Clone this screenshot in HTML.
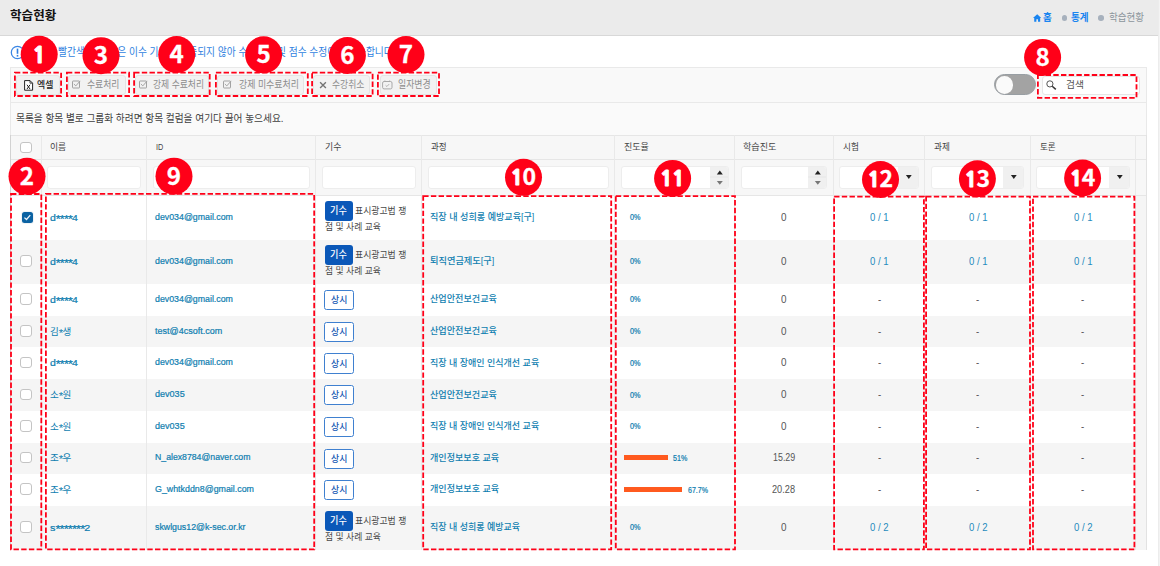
<!DOCTYPE html>
<html lang="ko">
<head>
<meta charset="utf-8">
<title>학습현황</title>
<style>
*{box-sizing:border-box;margin:0;padding:0}
html,body{width:1160px;height:566px;overflow:hidden;background:#fff}
body{position:relative;font-family:"Liberation Sans","Noto Sans CJK KR","NanumGothic",sans-serif;font-size:10px;color:#444}
.a{position:absolute}
.t{position:absolute;white-space:nowrap}
.g{background:#f5f5f5}
.vl{position:absolute;width:1px;background:#e8e8e8}
.hl{position:absolute;height:1px;background:#e6e6e6}
.fi{position:absolute;top:166px;height:22.8px;background:#fff;border:1px solid #ededed;border-radius:3px}
.sp{position:absolute;top:0;right:0;bottom:0;background:#f0f0f0;border-radius:0 2px 2px 0}
.cb{position:absolute;width:11.5px;height:11.5px;border:1px solid #c4c4c4;border-radius:3px;background:#fff}
.tagb{position:absolute;background:#0b58b8;border-radius:3px;width:28.3px;height:19.6px}
.tago{position:absolute;width:29.7px;height:20.4px;border:1px solid #3f80d0;border-radius:2.5px;background:#fff}
.btn{position:absolute;top:74.5px;height:20px;border:1px solid #e4e4e4;border-radius:3px;background:#f2f2f2}
.btn.on{background:#f1f1f1;border-color:#e6e6e6;box-shadow:0 1px 1.5px rgba(0,0,0,.12)}
.bar{position:absolute;height:4.8px;background:#ff5a1f}
</style>
</head>
<body>

<div class="a" style="left:0;top:0;width:1157.7px;height:36px;background:#ebebeb;border-bottom:1px solid #d8d8d8"></div>
<div class="a" style="left:1157.7px;top:0;width:3px;height:566px;background:#f3f3f3;border-left:1px solid #ececec"></div>
<div class="t" style="left:10px;top:8px;font-size:12.2px;line-height:16px;color:#111;transform:scaleX(1.0321);transform-origin:0 50%;font-weight:bold;">학습현황</div>
<svg class="a" style="left:1033px;top:13.5px" width="8.4" height="8.2" viewBox="0 0 9 8"><path d="M4.5 0 L9 4 H7.7 V8 H5.4 V5.3 H3.6 V8 H1.3 V4 H0 Z" fill="#1a85f0"/></svg>
<div class="t" style="left:1043px;top:11px;font-size:10.3px;line-height:14px;color:#1a85f0;transform:scaleX(0.9278);transform-origin:0 50%;font-weight:bold;">홈</div>
<div class="a" style="left:1061.7px;top:15.2px;width:5.6px;height:5.6px;border-radius:50%;background:#a7b1bd"></div>
<div class="t" style="left:1071.2px;top:11px;font-size:10.3px;line-height:14px;color:#1a85f0;transform:scaleX(0.9286);transform-origin:0 50%;font-weight:bold;">통계</div>
<div class="a" style="left:1098.2px;top:15.2px;width:5.6px;height:5.6px;border-radius:50%;background:#a7b1bd"></div>
<div class="t" style="left:1108.8px;top:11px;font-size:10.3px;line-height:14px;color:#8c959c;transform:scaleX(0.926);transform-origin:0 50%;">학습현황</div>
<svg class="a" style="left:9.5px;top:44.7px" width="15" height="15" viewBox="0 0 15 15"><circle cx="7.5" cy="7.5" r="6.2" fill="none" stroke="#3a86e4" stroke-width="1.25"/><rect x="6.7" y="3.6" width="1.6" height="5.2" fill="#2f7fe0"/><rect x="6.7" y="9.9" width="1.6" height="1.7" fill="#2f7fe0"/></svg>
<div class="t" style="left:58.1px;top:45px;font-size:11px;line-height:15px;color:#2f7fe0;transform:scaleX(0.8864);transform-origin:0 50%;">빨간색 표시 값은 이수 기준에 충족되지 않아 수료처리 및 점수 수정이 불가능합니다.</div>
<div class="a" style="left:10.3px;top:66.7px;width:1136.8px;height:36px;background:#f9f9f9;border:1px solid #e9e9e9"></div>
<div class="a" style="left:10.3px;top:102.7px;width:1136.8px;height:33px;background:#fafafa;border-left:1px solid #e9e9e9;border-right:1px solid #e9e9e9"></div>
<div class="t" style="left:16px;top:111px;font-size:10.3px;line-height:15px;color:#404040;transform:scaleX(0.9406);transform-origin:0 50%;">목록을 항목 별로 그룹화 하려면 항목 컬럼을 여기다 끌어 놓으세요.</div>
<div class="btn on" style="left:16.2px;width:43.7px"><svg class="a" style="left:6.5px;top:4px" width="10" height="11" viewBox="0 0 10 11"><path d="M0.6 0.6 H6 L8.6 3.2 V10.2 H0.6 Z" fill="#fff" stroke="#222" stroke-width="1"/><path d="M6 0.6 V3.2 H8.6" fill="none" stroke="#222" stroke-width="0.8"/><path d="M3 4.8 L6 9 M6 4.8 L3 9" stroke="#222" stroke-width="1" fill="none"/></svg></div>
<div class="t" style="left:37px;top:78px;font-size:9.1px;line-height:14px;color:#222;transform:scaleX(0.974);transform-origin:0 50%;font-weight:500;">엑셀</div>
<div class="btn" style="left:68.3px;width:57.5px"><svg class="a" style="left:3.2px;top:3.9px" width="9" height="10" viewBox="0 0 9 10"><rect x="0.5" y="2" width="7" height="7" rx="0.5" fill="none" stroke="#a2a2a2" stroke-width="1"/><path d="M1.9 5 L3.8 6.9 L8.2 1.9" fill="none" stroke="#a2a2a2" stroke-width="1"/></svg></div>
<div class="t" style="left:86.9px;top:78px;font-size:9.7px;line-height:14px;color:#8c8c8c;transform:scaleX(0.9087);transform-origin:0 50%;">수료처리</div>
<div class="btn" style="left:134.8px;width:74px"><svg class="a" style="left:3.2px;top:3.9px" width="9" height="10" viewBox="0 0 9 10"><rect x="0.5" y="2" width="7" height="7" rx="0.5" fill="none" stroke="#a2a2a2" stroke-width="1"/><path d="M1.9 5 L3.8 6.9 L8.2 1.9" fill="none" stroke="#a2a2a2" stroke-width="1"/></svg></div>
<div class="t" style="left:153.1px;top:78px;font-size:9.7px;line-height:14px;color:#8c8c8c;transform:scaleX(0.9079);transform-origin:0 50%;">강제 수료처리</div>
<div class="btn" style="left:217.2px;width:87.3px"><svg class="a" style="left:5.2px;top:3.9px" width="9" height="10" viewBox="0 0 9 10"><rect x="0.5" y="2" width="7" height="7" rx="0.5" fill="none" stroke="#a2a2a2" stroke-width="1"/><path d="M1.9 5 L3.8 6.9 L8.2 1.9" fill="none" stroke="#a2a2a2" stroke-width="1"/></svg></div>
<div class="t" style="left:238.6px;top:78px;font-size:9.7px;line-height:14px;color:#8c8c8c;transform:scaleX(0.9217);transform-origin:0 50%;">강제 미수료처리</div>
<div class="btn" style="left:313.4px;width:56.3px"><svg class="a" style="left:5px;top:5.5px" width="8" height="8" viewBox="0 0 8 8"><path d="M1.1 1.3 L6.9 6.9 M6.9 1.3 L1.1 6.9" stroke="#747474" stroke-width="1.35" fill="none"/></svg></div>
<div class="t" style="left:331.7px;top:78px;font-size:9.7px;line-height:14px;color:#8c8c8c;transform:scaleX(0.9087);transform-origin:0 50%;">수강취소</div>
<div class="btn" style="left:379.5px;width:57px"><svg class="a" style="left:1.6px;top:4.6px" width="11" height="10" viewBox="0 0 11 10"><rect x="0.6" y="1.5" width="9.4" height="7.4" rx="1.5" fill="none" stroke="#a8a8a8" stroke-width="1"/><path d="M2.9 0.5 V2 M7.7 0.5 V2" stroke="#a8a8a8" stroke-width="1"/><path d="M3.6 5.3 L4.9 6.5 L7.2 4.1" fill="none" stroke="#a8a8a8" stroke-width="0.9"/></svg></div>
<div class="t" style="left:397.7px;top:78px;font-size:9.7px;line-height:14px;color:#8c8c8c;transform:scaleX(0.9143);transform-origin:0 50%;">일자변경</div>
<div class="a" style="left:994px;top:74.3px;width:42px;height:21px;border-radius:11px;background:#a3a3a3;border:1px solid #989ea3"></div>
<div class="a" style="left:995.6px;top:75.9px;width:17.8px;height:17.8px;border-radius:50%;background:#fafafa"></div>
<div class="a" style="left:1042.2px;top:75.9px;width:98px;height:18.8px;border-radius:3px;background:#fff;border:1px solid #e6e6e6"></div>
<svg class="a" style="left:1046px;top:80.3px" width="11" height="10" viewBox="0 0 11 10"><circle cx="3.9" cy="3.9" r="3.1" fill="none" stroke="#555" stroke-width="1"/><path d="M6.2 6.2 L9.8 9.4" stroke="#333" stroke-width="1.5"/></svg>
<div class="t" style="left:1065.5px;top:78px;font-size:9.6px;line-height:14px;color:#505050;transform:scaleX(1.0138);transform-origin:0 50%;">검색</div>
<div class="a" style="left:10.5px;top:135.3px;width:1136.2px;height:60.2px;background:#f7f7f7;border-top:1px solid #e6e6e6"></div>
<div class="a" style="left:1135.9px;top:195.5px;width:10.8px;height:354.5px;background:#f5f5f5"></div>
<div class="a g" style="left:10.5px;top:239.5px;width:1125.4px;height:44.3px"></div>
<div class="a g" style="left:10.5px;top:315.8px;width:1125.4px;height:31.7px"></div>
<div class="a g" style="left:10.5px;top:379.2px;width:1125.4px;height:31.7px"></div>
<div class="a g" style="left:10.5px;top:442.6px;width:1125.4px;height:31.5px"></div>
<div class="a g" style="left:10.5px;top:505.7px;width:1125.4px;height:44.3px"></div>
<div class="hl" style="left:10.5px;top:158.9px;width:1136px"></div>
<div class="hl" style="left:10.5px;top:195px;width:1136px;background:#e6e6e6"></div>
<div class="vl" style="left:10.0px;top:135.3px;height:414.7px;background:#d2d2d2"></div>
<div class="vl" style="left:40.7px;top:135.3px;height:414.7px;background:#e9e9e9"></div>
<div class="vl" style="left:145.9px;top:135.3px;height:414.7px;background:#e9e9e9"></div>
<div class="vl" style="left:314.9px;top:135.3px;height:414.7px;background:#e9e9e9"></div>
<div class="vl" style="left:420.9px;top:135.3px;height:414.7px;background:#e9e9e9"></div>
<div class="vl" style="left:614.3px;top:135.3px;height:414.7px;background:#e9e9e9"></div>
<div class="vl" style="left:733.8px;top:135.3px;height:414.7px;background:#e9e9e9"></div>
<div class="vl" style="left:832.9px;top:135.3px;height:414.7px;background:#e9e9e9"></div>
<div class="vl" style="left:924.1px;top:135.3px;height:414.7px;background:#e9e9e9"></div>
<div class="vl" style="left:1029.9px;top:135.3px;height:414.7px;background:#e9e9e9"></div>
<div class="vl" style="left:1135.4px;top:135.3px;height:414.7px;background:#e9e9e9"></div>
<div class="vl" style="left:1146.0px;top:135.3px;height:414.7px;background:#e2e2e2"></div>
<div class="t" style="left:50.3px;top:140px;font-size:9.1px;line-height:14px;color:#444;transform:scaleX(0.9681);transform-origin:0 50%;">이름</div>
<div class="t" style="left:155.9px;top:140px;font-size:9.1px;line-height:14px;color:#444;transform:scaleX(0.8027);transform-origin:0 50%;">ID</div>
<div class="t" style="left:324.8px;top:140px;font-size:9.1px;line-height:14px;color:#444;transform:scaleX(0.974);transform-origin:0 50%;">기수</div>
<div class="t" style="left:430.8px;top:140px;font-size:9.1px;line-height:14px;color:#444;transform:scaleX(0.9382);transform-origin:0 50%;">과정</div>
<div class="t" style="left:624.1px;top:140px;font-size:9.1px;line-height:14px;color:#444;transform:scaleX(0.9917);transform-origin:0 50%;">진도율</div>
<div class="t" style="left:743.4px;top:140px;font-size:9.1px;line-height:14px;color:#444;transform:scaleX(0.9979);transform-origin:0 50%;">학습진도</div>
<div class="t" style="left:842.8px;top:140px;font-size:9.1px;line-height:14px;color:#444;transform:scaleX(0.9442);transform-origin:0 50%;">시험</div>
<div class="t" style="left:934.2px;top:140px;font-size:9.1px;line-height:14px;color:#444;transform:scaleX(0.9442);transform-origin:0 50%;">과제</div>
<div class="t" style="left:1039.7px;top:140px;font-size:9.1px;line-height:14px;color:#444;transform:scaleX(0.9382);transform-origin:0 50%;">토론</div>
<div class="cb" style="left:20.3px;top:141.8px"></div>
<div class="fi" style="left:47.2px;width:93.6px"></div>
<div class="fi" style="left:152.6px;width:157.2px"></div>
<div class="fi" style="left:322.1px;width:93.5px"></div>
<div class="fi" style="left:427.9px;width:181.3px"></div>
<div class="fi" style="left:621.0px;width:108.0px"><div class="sp" style="width:18.5px"><svg class="a" style="left:0;top:0" width="18" height="20" viewBox="0 0 18 20"><rect x="0" y="9.6" width="18" height="0.8" fill="#e4e4e4"/><path d="M6.8 7.6 L9.8 3.6 L12.8 7.6 Z" fill="#222"/><path d="M6.8 14 L9.8 17.8 L12.8 14 Z" fill="#777"/></svg></div></div>
<div class="fi" style="left:740.6px;width:86.7px"><div class="sp" style="width:18.5px"><svg class="a" style="left:0;top:0" width="18" height="20" viewBox="0 0 18 20"><rect x="0" y="9.6" width="18" height="0.8" fill="#e4e4e4"/><path d="M6.8 7.6 L9.8 3.6 L12.8 7.6 Z" fill="#222"/><path d="M6.8 14 L9.8 17.8 L12.8 14 Z" fill="#777"/></svg></div></div>
<div class="fi" style="left:838.9px;width:80.1px"><div class="sp" style="width:20px"><svg class="a" style="left:0;top:0" width="20" height="20" viewBox="0 0 20 20"><path d="M7.9 8 L13.7 8 L10.8 12 Z" fill="#222"/></svg></div></div>
<div class="fi" style="left:931.0px;width:93.1px"><div class="sp" style="width:20px"><svg class="a" style="left:0;top:0" width="20" height="20" viewBox="0 0 20 20"><path d="M7.9 8 L13.7 8 L10.8 12 Z" fill="#222"/></svg></div></div>
<div class="fi" style="left:1035.9px;width:94.2px"><div class="sp" style="width:20px"><svg class="a" style="left:0;top:0" width="20" height="20" viewBox="0 0 20 20"><path d="M7.9 8 L13.7 8 L10.8 12 Z" fill="#222"/></svg></div></div>
<div class="a" style="left:22px;top:212.4px;width:10.8px;height:10.8px;border-radius:2.5px;background:#0b62a2;box-shadow:0 0 0 1px #f0f3f6"></div>
<svg class="a" style="left:22px;top:212.4px" width="10.8" height="10.8" viewBox="0 0 11.5 11.5"><path d="M2.6 6 L4.8 8 L8.8 3.4" fill="none" stroke="#eef4fa" stroke-width="1.4"/></svg>
<div class="t" style="left:50px;top:210px;font-size:9.6px;line-height:14px;color:#0f7eb0;transform:scaleX(1.0933);transform-origin:0 50%;-webkit-text-stroke:0.22px #0f7eb0;">d<span style="position:relative;top:1.6px;font-size:1.2em;letter-spacing:-0.8px">****</span>4</div>
<div class="t" style="left:155.3px;top:210px;font-size:9.6px;line-height:14px;color:#0f7eb0;transform:scaleX(0.9177);transform-origin:0 50%;-webkit-text-stroke:0.22px #0f7eb0;">dev034@gmail.com</div>
<div class="tagb" style="left:324.6px;top:201.1px"></div>
<div class="t" style="left:330.2px;top:204px;font-size:9.7px;line-height:14px;color:#fff;transform:scaleX(0.9423);transform-origin:0 50%;font-weight:500;">기수</div>
<div class="t" style="left:355.2px;top:204px;font-size:9.6px;line-height:14px;color:#4a4a4a;transform:scaleX(0.9222);transform-origin:0 50%;">표시광고법 쟁</div>
<div class="t" style="left:324.8px;top:220px;font-size:9.6px;line-height:14px;color:#4a4a4a;transform:scaleX(0.9169);transform-origin:0 50%;">점 및 사례 교육</div>
<div class="t" style="left:430.1px;top:210px;font-size:9.2px;line-height:14px;color:#0f7eb0;transform:scaleX(0.9872);transform-origin:0 50%;font-weight:500;">직장 내 성희롱 예방교육[구]</div>
<div class="t" style="left:629.5px;top:211px;font-size:8.2px;line-height:14px;color:#0f7eb0;transform:scaleX(0.8865);transform-origin:0 50%;-webkit-text-stroke:0.22px #0f7eb0;">0%</div>
<div class="t" style="left:781.15px;top:211px;font-size:10px;line-height:14px;color:#555;transform:scaleX(0.9888);transform-origin:0 50%;">0</div>
<div class="t" style="left:869.9px;top:211px;font-size:10px;line-height:14px;color:#1f8bbd;transform:scaleX(0.9554);transform-origin:0 50%;">0 / 1</div>
<div class="t" style="left:968.6px;top:211px;font-size:10px;line-height:14px;color:#1f8bbd;transform:scaleX(0.9554);transform-origin:0 50%;">0 / 1</div>
<div class="t" style="left:1073.7px;top:211px;font-size:10px;line-height:14px;color:#1f8bbd;transform:scaleX(0.9554);transform-origin:0 50%;">0 / 1</div>
<div class="cb" style="left:20.3px;top:255.1px"></div>
<div class="t" style="left:50px;top:254px;font-size:9.6px;line-height:14px;color:#0f7eb0;transform:scaleX(1.0933);transform-origin:0 50%;-webkit-text-stroke:0.22px #0f7eb0;">d<span style="position:relative;top:1.6px;font-size:1.2em;letter-spacing:-0.8px">****</span>4</div>
<div class="t" style="left:155.3px;top:254px;font-size:9.6px;line-height:14px;color:#0f7eb0;transform:scaleX(0.9177);transform-origin:0 50%;-webkit-text-stroke:0.22px #0f7eb0;">dev034@gmail.com</div>
<div class="tagb" style="left:324.6px;top:245.1px"></div>
<div class="t" style="left:330.2px;top:248px;font-size:9.7px;line-height:14px;color:#fff;transform:scaleX(0.9423);transform-origin:0 50%;font-weight:500;">기수</div>
<div class="t" style="left:355.2px;top:248px;font-size:9.6px;line-height:14px;color:#4a4a4a;transform:scaleX(0.9222);transform-origin:0 50%;">표시광고법 쟁</div>
<div class="t" style="left:324.8px;top:264px;font-size:9.6px;line-height:14px;color:#4a4a4a;transform:scaleX(0.9169);transform-origin:0 50%;">점 및 사례 교육</div>
<div class="t" style="left:430.1px;top:254px;font-size:9.2px;line-height:14px;color:#0f7eb0;transform:scaleX(1.0018);transform-origin:0 50%;font-weight:500;">퇴직연금제도[구]</div>
<div class="t" style="left:629.5px;top:255px;font-size:8.2px;line-height:14px;color:#0f7eb0;transform:scaleX(0.8865);transform-origin:0 50%;-webkit-text-stroke:0.22px #0f7eb0;">0%</div>
<div class="t" style="left:781.15px;top:255px;font-size:10px;line-height:14px;color:#555;transform:scaleX(0.9888);transform-origin:0 50%;">0</div>
<div class="t" style="left:869.9px;top:255px;font-size:10px;line-height:14px;color:#1f8bbd;transform:scaleX(0.9554);transform-origin:0 50%;">0 / 1</div>
<div class="t" style="left:968.6px;top:255px;font-size:10px;line-height:14px;color:#1f8bbd;transform:scaleX(0.9554);transform-origin:0 50%;">0 / 1</div>
<div class="t" style="left:1073.7px;top:255px;font-size:10px;line-height:14px;color:#1f8bbd;transform:scaleX(0.9554);transform-origin:0 50%;">0 / 1</div>
<div class="cb" style="left:20.3px;top:293.3px"></div>
<div class="t" style="left:50px;top:292px;font-size:9.6px;line-height:14px;color:#0f7eb0;transform:scaleX(1.0933);transform-origin:0 50%;-webkit-text-stroke:0.22px #0f7eb0;">d<span style="position:relative;top:1.6px;font-size:1.2em;letter-spacing:-0.8px">****</span>4</div>
<div class="t" style="left:155.3px;top:292px;font-size:9.6px;line-height:14px;color:#0f7eb0;transform:scaleX(0.9177);transform-origin:0 50%;-webkit-text-stroke:0.22px #0f7eb0;">dev034@gmail.com</div>
<div class="tago" style="left:324.1px;top:289.7px"></div>
<div class="t" style="left:331.2px;top:293px;font-size:9.6px;line-height:14px;color:#1559b3;transform:scaleX(0.9232);transform-origin:0 50%;font-weight:500;">상시</div>
<div class="t" style="left:430.1px;top:292px;font-size:9.2px;line-height:14px;color:#0f7eb0;transform:scaleX(0.9893);transform-origin:0 50%;font-weight:500;">산업안전보건교육</div>
<div class="t" style="left:629.5px;top:293px;font-size:8.2px;line-height:14px;color:#0f7eb0;transform:scaleX(0.8865);transform-origin:0 50%;-webkit-text-stroke:0.22px #0f7eb0;">0%</div>
<div class="t" style="left:781.15px;top:293px;font-size:10px;line-height:14px;color:#555;transform:scaleX(0.9888);transform-origin:0 50%;">0</div>
<div class="t" style="left:877.6px;top:293px;font-size:10px;line-height:14px;color:#555;transform:scaleX(0.957);transform-origin:0 50%;">-</div>
<div class="t" style="left:976.3px;top:293px;font-size:10px;line-height:14px;color:#555;transform:scaleX(0.957);transform-origin:0 50%;">-</div>
<div class="t" style="left:1081.4px;top:293px;font-size:10px;line-height:14px;color:#555;transform:scaleX(0.957);transform-origin:0 50%;">-</div>
<div class="cb" style="left:20.3px;top:325.1px"></div>
<div class="t" style="left:50px;top:324px;font-size:9.6px;line-height:14px;color:#0f7eb0;transform:scaleX(0.9934);transform-origin:0 50%;">김<span style="position:relative;top:1.6px;font-size:1.2em;letter-spacing:-0.8px">*</span>생</div>
<div class="t" style="left:155.3px;top:324px;font-size:9.6px;line-height:14px;color:#0f7eb0;transform:scaleX(0.9386);transform-origin:0 50%;-webkit-text-stroke:0.22px #0f7eb0;">test@4csoft.com</div>
<div class="tago" style="left:324.1px;top:321.7px"></div>
<div class="t" style="left:331.2px;top:325px;font-size:9.6px;line-height:14px;color:#1559b3;transform:scaleX(0.9232);transform-origin:0 50%;font-weight:500;">상시</div>
<div class="t" style="left:430.1px;top:324px;font-size:9.2px;line-height:14px;color:#0f7eb0;transform:scaleX(0.9893);transform-origin:0 50%;font-weight:500;">산업안전보건교육</div>
<div class="t" style="left:629.5px;top:325px;font-size:8.2px;line-height:14px;color:#0f7eb0;transform:scaleX(0.8865);transform-origin:0 50%;-webkit-text-stroke:0.22px #0f7eb0;">0%</div>
<div class="t" style="left:781.15px;top:325px;font-size:10px;line-height:14px;color:#555;transform:scaleX(0.9888);transform-origin:0 50%;">0</div>
<div class="t" style="left:877.6px;top:325px;font-size:10px;line-height:14px;color:#555;transform:scaleX(0.957);transform-origin:0 50%;">-</div>
<div class="t" style="left:976.3px;top:325px;font-size:10px;line-height:14px;color:#555;transform:scaleX(0.957);transform-origin:0 50%;">-</div>
<div class="t" style="left:1081.4px;top:325px;font-size:10px;line-height:14px;color:#555;transform:scaleX(0.957);transform-origin:0 50%;">-</div>
<div class="cb" style="left:20.3px;top:356.9px"></div>
<div class="t" style="left:50px;top:355px;font-size:9.6px;line-height:14px;color:#0f7eb0;transform:scaleX(1.0933);transform-origin:0 50%;-webkit-text-stroke:0.22px #0f7eb0;">d<span style="position:relative;top:1.6px;font-size:1.2em;letter-spacing:-0.8px">****</span>4</div>
<div class="t" style="left:155.3px;top:355px;font-size:9.6px;line-height:14px;color:#0f7eb0;transform:scaleX(0.9177);transform-origin:0 50%;-webkit-text-stroke:0.22px #0f7eb0;">dev034@gmail.com</div>
<div class="tago" style="left:324.1px;top:353.4px"></div>
<div class="t" style="left:331.2px;top:357px;font-size:9.6px;line-height:14px;color:#1559b3;transform:scaleX(0.9232);transform-origin:0 50%;font-weight:500;">상시</div>
<div class="t" style="left:430.1px;top:356px;font-size:9.2px;line-height:14px;color:#0f7eb0;transform:scaleX(0.9777);transform-origin:0 50%;font-weight:500;">직장 내 장애인 인식개선 교육</div>
<div class="t" style="left:629.5px;top:357px;font-size:8.2px;line-height:14px;color:#0f7eb0;transform:scaleX(0.8865);transform-origin:0 50%;-webkit-text-stroke:0.22px #0f7eb0;">0%</div>
<div class="t" style="left:781.15px;top:356px;font-size:10px;line-height:14px;color:#555;transform:scaleX(0.9888);transform-origin:0 50%;">0</div>
<div class="t" style="left:877.6px;top:356px;font-size:10px;line-height:14px;color:#555;transform:scaleX(0.957);transform-origin:0 50%;">-</div>
<div class="t" style="left:976.3px;top:356px;font-size:10px;line-height:14px;color:#555;transform:scaleX(0.957);transform-origin:0 50%;">-</div>
<div class="t" style="left:1081.4px;top:356px;font-size:10px;line-height:14px;color:#555;transform:scaleX(0.957);transform-origin:0 50%;">-</div>
<div class="cb" style="left:20.3px;top:388.5px"></div>
<div class="t" style="left:50px;top:387px;font-size:9.6px;line-height:14px;color:#0f7eb0;transform:scaleX(0.9934);transform-origin:0 50%;">소<span style="position:relative;top:1.6px;font-size:1.2em;letter-spacing:-0.8px">*</span>원</div>
<div class="t" style="left:155.3px;top:387px;font-size:9.6px;line-height:14px;color:#0f7eb0;transform:scaleX(0.9433);transform-origin:0 50%;-webkit-text-stroke:0.22px #0f7eb0;">dev035</div>
<div class="tago" style="left:324.1px;top:385.1px"></div>
<div class="t" style="left:331.2px;top:388px;font-size:9.6px;line-height:14px;color:#1559b3;transform:scaleX(0.9232);transform-origin:0 50%;font-weight:500;">상시</div>
<div class="t" style="left:430.1px;top:388px;font-size:9.2px;line-height:14px;color:#0f7eb0;transform:scaleX(0.9893);transform-origin:0 50%;font-weight:500;">산업안전보건교육</div>
<div class="t" style="left:629.5px;top:389px;font-size:8.2px;line-height:14px;color:#0f7eb0;transform:scaleX(0.8865);transform-origin:0 50%;-webkit-text-stroke:0.22px #0f7eb0;">0%</div>
<div class="t" style="left:781.15px;top:388px;font-size:10px;line-height:14px;color:#555;transform:scaleX(0.9888);transform-origin:0 50%;">0</div>
<div class="t" style="left:877.6px;top:388px;font-size:10px;line-height:14px;color:#555;transform:scaleX(0.957);transform-origin:0 50%;">-</div>
<div class="t" style="left:976.3px;top:388px;font-size:10px;line-height:14px;color:#555;transform:scaleX(0.957);transform-origin:0 50%;">-</div>
<div class="t" style="left:1081.4px;top:388px;font-size:10px;line-height:14px;color:#555;transform:scaleX(0.957);transform-origin:0 50%;">-</div>
<div class="cb" style="left:20.3px;top:420.2px"></div>
<div class="t" style="left:50px;top:419px;font-size:9.6px;line-height:14px;color:#0f7eb0;transform:scaleX(0.9934);transform-origin:0 50%;">소<span style="position:relative;top:1.6px;font-size:1.2em;letter-spacing:-0.8px">*</span>원</div>
<div class="t" style="left:155.3px;top:419px;font-size:9.6px;line-height:14px;color:#0f7eb0;transform:scaleX(0.9433);transform-origin:0 50%;-webkit-text-stroke:0.22px #0f7eb0;">dev035</div>
<div class="tago" style="left:324.1px;top:416.8px"></div>
<div class="t" style="left:331.2px;top:420px;font-size:9.6px;line-height:14px;color:#1559b3;transform:scaleX(0.9232);transform-origin:0 50%;font-weight:500;">상시</div>
<div class="t" style="left:430.1px;top:419px;font-size:9.2px;line-height:14px;color:#0f7eb0;transform:scaleX(0.9777);transform-origin:0 50%;font-weight:500;">직장 내 장애인 인식개선 교육</div>
<div class="t" style="left:629.5px;top:420px;font-size:8.2px;line-height:14px;color:#0f7eb0;transform:scaleX(0.8865);transform-origin:0 50%;-webkit-text-stroke:0.22px #0f7eb0;">0%</div>
<div class="t" style="left:781.15px;top:420px;font-size:10px;line-height:14px;color:#555;transform:scaleX(0.9888);transform-origin:0 50%;">0</div>
<div class="t" style="left:877.6px;top:420px;font-size:10px;line-height:14px;color:#555;transform:scaleX(0.957);transform-origin:0 50%;">-</div>
<div class="t" style="left:976.3px;top:420px;font-size:10px;line-height:14px;color:#555;transform:scaleX(0.957);transform-origin:0 50%;">-</div>
<div class="t" style="left:1081.4px;top:420px;font-size:10px;line-height:14px;color:#555;transform:scaleX(0.957);transform-origin:0 50%;">-</div>
<div class="cb" style="left:20.3px;top:451.9px"></div>
<div class="t" style="left:50px;top:450px;font-size:9.6px;line-height:14px;color:#0f7eb0;transform:scaleX(0.9934);transform-origin:0 50%;">조<span style="position:relative;top:1.6px;font-size:1.2em;letter-spacing:-0.8px">*</span>우</div>
<div class="t" style="left:155.3px;top:450px;font-size:9.6px;line-height:14px;color:#0f7eb0;transform:scaleX(0.9073);transform-origin:0 50%;-webkit-text-stroke:0.22px #0f7eb0;">N_alex8784@naver.com</div>
<div class="tago" style="left:324.1px;top:448.5px"></div>
<div class="t" style="left:331.2px;top:452px;font-size:9.6px;line-height:14px;color:#1559b3;transform:scaleX(0.9232);transform-origin:0 50%;font-weight:500;">상시</div>
<div class="t" style="left:430.1px;top:451px;font-size:9.2px;line-height:14px;color:#0f7eb0;transform:scaleX(0.9852);transform-origin:0 50%;font-weight:500;">개인정보보호 교육</div>
<div class="bar" style="left:623.7px;top:455.1px;width:43.9px"></div>
<div class="t" style="left:673.25px;top:452px;font-size:8.2px;line-height:14px;color:#0f7eb0;transform:scaleX(0.8694);transform-origin:0 50%;-webkit-text-stroke:0.22px #0f7eb0;">51%</div>
<div class="t" style="left:772.77px;top:451px;font-size:10px;line-height:14px;color:#555;transform:scaleX(0.8889);transform-origin:0 50%;">15.29</div>
<div class="t" style="left:877.6px;top:451px;font-size:10px;line-height:14px;color:#555;transform:scaleX(0.957);transform-origin:0 50%;">-</div>
<div class="t" style="left:976.3px;top:451px;font-size:10px;line-height:14px;color:#555;transform:scaleX(0.957);transform-origin:0 50%;">-</div>
<div class="t" style="left:1081.4px;top:451px;font-size:10px;line-height:14px;color:#555;transform:scaleX(0.957);transform-origin:0 50%;">-</div>
<div class="cb" style="left:20.3px;top:483.4px"></div>
<div class="t" style="left:50px;top:482px;font-size:9.6px;line-height:14px;color:#0f7eb0;transform:scaleX(0.9934);transform-origin:0 50%;">조<span style="position:relative;top:1.6px;font-size:1.2em;letter-spacing:-0.8px">*</span>우</div>
<div class="t" style="left:155.3px;top:482px;font-size:9.6px;line-height:14px;color:#0f7eb0;transform:scaleX(0.9219);transform-origin:0 50%;-webkit-text-stroke:0.22px #0f7eb0;">G_whtkddn8@gmail.com</div>
<div class="tago" style="left:324.1px;top:480.0px"></div>
<div class="t" style="left:331.2px;top:483px;font-size:9.6px;line-height:14px;color:#1559b3;transform:scaleX(0.9232);transform-origin:0 50%;font-weight:500;">상시</div>
<div class="t" style="left:430.1px;top:482px;font-size:9.2px;line-height:14px;color:#0f7eb0;transform:scaleX(0.9852);transform-origin:0 50%;font-weight:500;">개인정보보호 교육</div>
<div class="bar" style="left:623.7px;top:487.0px;width:58.2px"></div>
<div class="t" style="left:687.5px;top:484px;font-size:8.2px;line-height:14px;color:#0f7eb0;transform:scaleX(0.8614);transform-origin:0 50%;-webkit-text-stroke:0.22px #0f7eb0;">67.7%</div>
<div class="t" style="left:772.4px;top:483px;font-size:10px;line-height:14px;color:#555;transform:scaleX(0.9189);transform-origin:0 50%;">20.28</div>
<div class="t" style="left:877.6px;top:483px;font-size:10px;line-height:14px;color:#555;transform:scaleX(0.957);transform-origin:0 50%;">-</div>
<div class="t" style="left:976.3px;top:483px;font-size:10px;line-height:14px;color:#555;transform:scaleX(0.957);transform-origin:0 50%;">-</div>
<div class="t" style="left:1081.4px;top:483px;font-size:10px;line-height:14px;color:#555;transform:scaleX(0.957);transform-origin:0 50%;">-</div>
<div class="cb" style="left:20.3px;top:521.4px"></div>
<div class="t" style="left:50px;top:520px;font-size:9.6px;line-height:14px;color:#0f7eb0;transform:scaleX(1.1232);transform-origin:0 50%;-webkit-text-stroke:0.22px #0f7eb0;">s<span style="position:relative;top:1.6px;font-size:1.2em;letter-spacing:-0.8px">*******</span>2</div>
<div class="t" style="left:155.3px;top:520px;font-size:9.6px;line-height:14px;color:#0f7eb0;transform:scaleX(0.9157);transform-origin:0 50%;-webkit-text-stroke:0.22px #0f7eb0;">skwlgus12@k-sec.or.kr</div>
<div class="tagb" style="left:324.6px;top:511.3px"></div>
<div class="t" style="left:330.2px;top:514px;font-size:9.7px;line-height:14px;color:#fff;transform:scaleX(0.9423);transform-origin:0 50%;font-weight:500;">기수</div>
<div class="t" style="left:355.2px;top:514px;font-size:9.6px;line-height:14px;color:#4a4a4a;transform:scaleX(0.9222);transform-origin:0 50%;">표시광고법 쟁</div>
<div class="t" style="left:324.8px;top:530px;font-size:9.6px;line-height:14px;color:#4a4a4a;transform:scaleX(0.9169);transform-origin:0 50%;">점 및 사례 교육</div>
<div class="t" style="left:430.1px;top:520px;font-size:9.2px;line-height:14px;color:#0f7eb0;transform:scaleX(0.9752);transform-origin:0 50%;font-weight:500;">직장 내 성희롱 예방교육</div>
<div class="t" style="left:629.5px;top:521px;font-size:8.2px;line-height:14px;color:#0f7eb0;transform:scaleX(0.8865);transform-origin:0 50%;-webkit-text-stroke:0.22px #0f7eb0;">0%</div>
<div class="t" style="left:781.15px;top:521px;font-size:10px;line-height:14px;color:#555;transform:scaleX(0.9888);transform-origin:0 50%;">0</div>
<div class="t" style="left:869.9px;top:521px;font-size:10px;line-height:14px;color:#1f8bbd;transform:scaleX(0.9554);transform-origin:0 50%;">0 / 2</div>
<div class="t" style="left:968.6px;top:521px;font-size:10px;line-height:14px;color:#1f8bbd;transform:scaleX(0.9554);transform-origin:0 50%;">0 / 2</div>
<div class="t" style="left:1073.7px;top:521px;font-size:10px;line-height:14px;color:#1f8bbd;transform:scaleX(0.9554);transform-origin:0 50%;">0 / 2</div>
<svg class="a" style="left:0;top:0;pointer-events:none" width="1160" height="566" viewBox="0 0 1160 566">
<rect x="14.9" y="72.7" width="46.2" height="23.3" fill="none" stroke="#ff0018" stroke-width="1.8" stroke-dasharray="5.4 2.3"/>
<rect x="66.9" y="72.7" width="62.2" height="23.3" fill="none" stroke="#ff0018" stroke-width="1.8" stroke-dasharray="5.4 2.3"/>
<rect x="134.1" y="72.7" width="75.6" height="23.3" fill="none" stroke="#ff0018" stroke-width="1.8" stroke-dasharray="5.4 2.3"/>
<rect x="215.9" y="72.7" width="91.9" height="23.3" fill="none" stroke="#ff0018" stroke-width="1.8" stroke-dasharray="5.4 2.3"/>
<rect x="312.1" y="72.7" width="60.5" height="23.3" fill="none" stroke="#ff0018" stroke-width="1.8" stroke-dasharray="5.4 2.3"/>
<rect x="377.9" y="72.7" width="61.1" height="23.3" fill="none" stroke="#ff0018" stroke-width="1.8" stroke-dasharray="5.4 2.3"/>
<rect x="1037.9" y="75" width="98.6" height="22.8" fill="none" stroke="#ff0018" stroke-width="1.8" stroke-dasharray="5.4 2.3"/>
<rect x="11" y="194" width="30.3" height="355.4" fill="none" stroke="#ff0018" stroke-width="1.8" stroke-dasharray="5.4 2.3"/>
<rect x="45.9" y="193.8" width="268.3" height="355.6" fill="none" stroke="#ff0018" stroke-width="1.8" stroke-dasharray="5.4 2.3"/>
<rect x="423.2" y="196.1" width="188" height="353.3" fill="none" stroke="#ff0018" stroke-width="1.8" stroke-dasharray="5.4 2.3"/>
<rect x="615.8" y="196.1" width="119.2" height="353.3" fill="none" stroke="#ff0018" stroke-width="1.8" stroke-dasharray="5.4 2.3"/>
<rect x="834.1" y="196.6" width="89.8" height="352.8" fill="none" stroke="#ff0018" stroke-width="1.8" stroke-dasharray="5.4 2.3"/>
<rect x="926.1" y="196.6" width="103.9" height="352.8" fill="none" stroke="#ff0018" stroke-width="1.8" stroke-dasharray="5.4 2.3"/>
<rect x="1033" y="196.6" width="101.4" height="352.8" fill="none" stroke="#ff0018" stroke-width="1.8" stroke-dasharray="5.4 2.3"/>
<circle cx="39.2" cy="54.3" r="18.5" fill="#ff0018"/>
<text x="39.2" y="62.6" text-anchor="middle" font-family="'Noto Sans CJK KR','Liberation Sans',sans-serif" font-weight="bold" font-size="24.2" fill="#fff" stroke="#fff" stroke-width="0.3"><tspan font-family="NanumGothic" font-weight="800" stroke-width="1" font-size="22.3">1</tspan></text>
<circle cx="27" cy="176.3" r="18.5" fill="#ff0018"/>
<text x="27" y="184.6" text-anchor="middle" font-family="'Noto Sans CJK KR','Liberation Sans',sans-serif" font-weight="bold" font-size="24.2" fill="#fff" stroke="#fff" stroke-width="0.3">2</text>
<circle cx="101" cy="55.7" r="18.5" fill="#ff0018"/>
<text x="101" y="64.0" text-anchor="middle" font-family="'Noto Sans CJK KR','Liberation Sans',sans-serif" font-weight="bold" font-size="24.2" fill="#fff" stroke="#fff" stroke-width="0.3">3</text>
<circle cx="176.7" cy="54.6" r="18.5" fill="#ff0018"/>
<text x="176.7" y="62.9" text-anchor="middle" font-family="'Noto Sans CJK KR','Liberation Sans',sans-serif" font-weight="bold" font-size="24.2" fill="#fff" stroke="#fff" stroke-width="0.3">4</text>
<circle cx="263.6" cy="54.8" r="18.5" fill="#ff0018"/>
<text x="263.6" y="63.1" text-anchor="middle" font-family="'Noto Sans CJK KR','Liberation Sans',sans-serif" font-weight="bold" font-size="24.2" fill="#fff" stroke="#fff" stroke-width="0.3">5</text>
<circle cx="347.4" cy="55.5" r="18.5" fill="#ff0018"/>
<text x="347.4" y="63.8" text-anchor="middle" font-family="'Noto Sans CJK KR','Liberation Sans',sans-serif" font-weight="bold" font-size="24.2" fill="#fff" stroke="#fff" stroke-width="0.3">6</text>
<circle cx="406" cy="54.6" r="18.5" fill="#ff0018"/>
<text x="406" y="62.9" text-anchor="middle" font-family="'Noto Sans CJK KR','Liberation Sans',sans-serif" font-weight="bold" font-size="24.2" fill="#fff" stroke="#fff" stroke-width="0.3">7</text>
<circle cx="1042.6" cy="57.4" r="18.5" fill="#ff0018"/>
<text x="1042.6" y="65.7" text-anchor="middle" font-family="'Noto Sans CJK KR','Liberation Sans',sans-serif" font-weight="bold" font-size="24.2" fill="#fff" stroke="#fff" stroke-width="0.3">8</text>
<circle cx="174" cy="176.2" r="18.5" fill="#ff0018"/>
<text x="174" y="184.5" text-anchor="middle" font-family="'Noto Sans CJK KR','Liberation Sans',sans-serif" font-weight="bold" font-size="24.2" fill="#fff" stroke="#fff" stroke-width="0.3">9</text>
<circle cx="523.5" cy="177.3" r="18.5" fill="#ff0018"/>
<text x="522.9" y="185.2" text-anchor="middle" font-family="'Noto Sans CJK KR','Liberation Sans',sans-serif" font-weight="bold" font-size="23" fill="#fff" stroke="#fff" stroke-width="0.3" letter-spacing="-0.9"><tspan font-family="NanumGothic" font-weight="800" stroke-width="1" font-size="21.2">1</tspan>0</text>
<circle cx="672.6" cy="178.4" r="18.5" fill="#ff0018"/>
<text x="672.0" y="186.3" text-anchor="middle" font-family="'Noto Sans CJK KR','Liberation Sans',sans-serif" font-weight="bold" font-size="23" fill="#fff" stroke="#fff" stroke-width="0.3" letter-spacing="-0.9"><tspan font-family="NanumGothic" font-weight="800" stroke-width="1" font-size="21.2">1</tspan><tspan font-family="NanumGothic" font-weight="800" stroke-width="1" font-size="21.2">1</tspan></text>
<circle cx="880.5" cy="179.5" r="18.5" fill="#ff0018"/>
<text x="879.9" y="187.4" text-anchor="middle" font-family="'Noto Sans CJK KR','Liberation Sans',sans-serif" font-weight="bold" font-size="23" fill="#fff" stroke="#fff" stroke-width="0.3" letter-spacing="-0.9"><tspan font-family="NanumGothic" font-weight="800" stroke-width="1" font-size="21.2">1</tspan>2</text>
<circle cx="977.4" cy="178.8" r="18.5" fill="#ff0018"/>
<text x="976.8" y="186.7" text-anchor="middle" font-family="'Noto Sans CJK KR','Liberation Sans',sans-serif" font-weight="bold" font-size="23" fill="#fff" stroke="#fff" stroke-width="0.3" letter-spacing="-0.9"><tspan font-family="NanumGothic" font-weight="800" stroke-width="1" font-size="21.2">1</tspan>3</text>
<circle cx="1082.6" cy="178" r="18.5" fill="#ff0018"/>
<text x="1082.0" y="185.9" text-anchor="middle" font-family="'Noto Sans CJK KR','Liberation Sans',sans-serif" font-weight="bold" font-size="23" fill="#fff" stroke="#fff" stroke-width="0.3" letter-spacing="-0.9"><tspan font-family="NanumGothic" font-weight="800" stroke-width="1" font-size="21.2">1</tspan>4</text>
</svg>
</body></html>
